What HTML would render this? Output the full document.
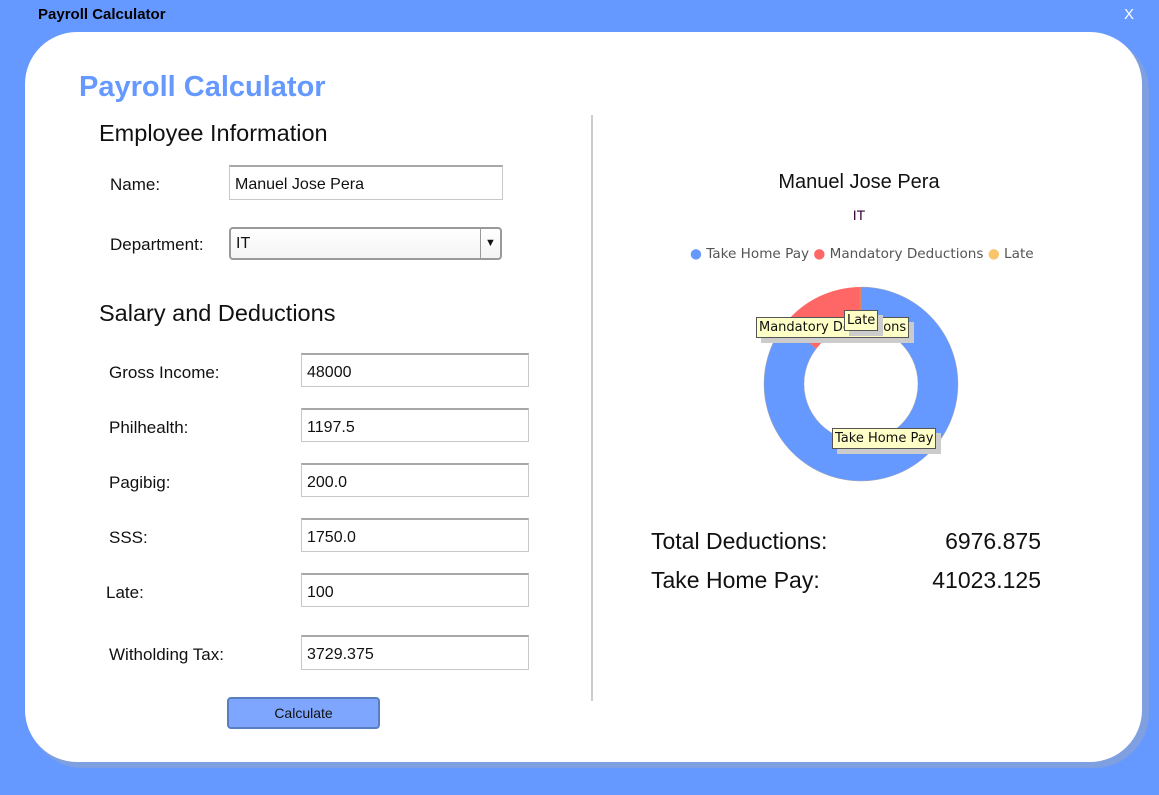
<!DOCTYPE html>
<html><head><meta charset="utf-8"><style>
body{margin:0;width:1159px;height:795px;background:#6699ff;position:relative;overflow:hidden;font-family:"Liberation Sans","DejaVu Sans",sans-serif;color:#111}
.a{position:absolute;white-space:nowrap}
.title{left:38px;top:6px;font-weight:bold;font-size:15px;color:#000}
.shadow{left:28px;top:36px;width:1121px;height:732px;background:#7fa0e0;border-radius:55px}
.panel{left:25px;top:32px;width:1117px;height:730px;background:#fff;border-radius:52px}
.inp{position:absolute;border:1px solid #c8c8c8;border-top:2px solid #a8a8a8;background:#fff;box-sizing:border-box;font-size:16px;padding-left:5px;padding-top:5px;line-height:26px}
.lbl{position:absolute;font-size:17px;white-space:nowrap}
.h2{position:absolute;font-size:23.5px;white-space:nowrap}
.tip{position:absolute;background:#ffffc8;border:1px solid #555;font-size:13px;padding:0 2px;line-height:19px;box-shadow:5px 5px 0 #ccc;white-space:nowrap;font-family:"DejaVu Sans",sans-serif}
</style></head><body>
<div class="a title">Payroll Calculator</div>
<div class="a" style="left:1124px;top:6px;color:#fff;font-size:15px">X</div>
<div class="a shadow"></div>
<div class="a panel"></div>
<div class="a" style="left:79px;top:71px;font-size:29px;font-weight:bold;color:#6699ff">Payroll Calculator</div>
<div class="h2" style="left:99px;top:120px">Employee Information</div>
<div class="lbl" style="left:110px;top:175px">Name:</div>
<div class="inp" style="left:229px;top:165px;width:274px;height:35px">Manuel Jose Pera</div>
<div class="lbl" style="left:110px;top:235px">Department:</div>
<div class="inp" style="left:229px;top:227px;width:273px;height:33px;border:2px solid #999;border-radius:4px;padding-top:0;line-height:29px;background:linear-gradient(#fff,#f4f4f4)">IT<div style="position:absolute;right:0;top:0;width:19px;height:29px;border-left:1px solid #999;font-size:11px;text-align:center">▼</div></div>
<div class="h2" style="left:99px;top:300px">Salary and Deductions</div>
<div class="lbl" style="left:109px;top:363px">Gross Income:</div>
<div class="inp" style="left:301px;top:353px;width:228px;height:34px">48000</div>
<div class="lbl" style="left:109px;top:418px">Philhealth:</div>
<div class="inp" style="left:301px;top:408px;width:228px;height:34px">1197.5</div>
<div class="lbl" style="left:109px;top:473px">Pagibig:</div>
<div class="inp" style="left:301px;top:463px;width:228px;height:34px">200.0</div>
<div class="lbl" style="left:109px;top:528px">SSS:</div>
<div class="inp" style="left:301px;top:518px;width:228px;height:34px">1750.0</div>
<div class="lbl" style="left:106px;top:583px">Late:</div>
<div class="inp" style="left:301px;top:573px;width:228px;height:34px">100</div>
<div class="lbl" style="left:109px;top:645px">Witholding Tax:</div>
<div class="inp" style="left:301px;top:635px;width:228px;height:35px">3729.375</div>
<div class="a" style="left:227px;top:697px;width:153px;height:32px;box-sizing:border-box;border:2px solid #5a7fc0;border-radius:4px;background:#7fa6ff;text-align:center;line-height:28px;font-size:14px">Calculate</div>
<div class="a" style="left:591px;top:115px;width:2px;height:586px;background:#ccc"></div>
<div class="a" style="left:659px;top:171px;width:400px;text-align:center;font-size:20px">Manuel Jose Pera</div>
<div class="a" style="left:659px;top:207px;width:400px;text-align:center;font-size:14px;color:#303">IT</div>
<div class="a" style="left:690px;top:246px;font-size:13.6px;color:#555;font-family:'DejaVu Sans',sans-serif"><span style="color:#6699ff">●</span> Take Home Pay <span style="color:#f66">●</span> Mandatory Deductions <span style="color:#f9c46a">●</span> Late</div>
<svg class="a" style="left:0;top:0" width="1159" height="795">
<path d="M861 287 A97 97 0 1 1 785 323.7 L816.3 348.6 A57 57 0 1 0 861 327 Z" fill="#6699ff" stroke="#aaa" stroke-width="0.5"/>
<path d="M861 287 L861 327 A57 57 0 0 0 816.3 348.6 L785 323.7 A97 97 0 0 1 861 287 Z" fill="#f66"/>
<line x1="860" y1="287" x2="860" y2="327" stroke="#b8a060" stroke-width="1"/>
</svg>
<div class="tip" style="left:756px;top:317px">Mandatory Deductions</div>
<div class="tip" style="left:844px;top:310px">Late</div>
<div class="tip" style="left:832px;top:428px">Take Home Pay</div>
<div class="a" style="left:651px;top:528px;font-size:23px">Total Deductions:</div>
<div class="a" style="left:900px;top:528px;width:141px;text-align:right;font-size:23px">6976.875</div>
<div class="a" style="left:651px;top:567px;font-size:23px">Take Home Pay:</div>
<div class="a" style="left:900px;top:567px;width:141px;text-align:right;font-size:23px">41023.125</div>
</body></html>
